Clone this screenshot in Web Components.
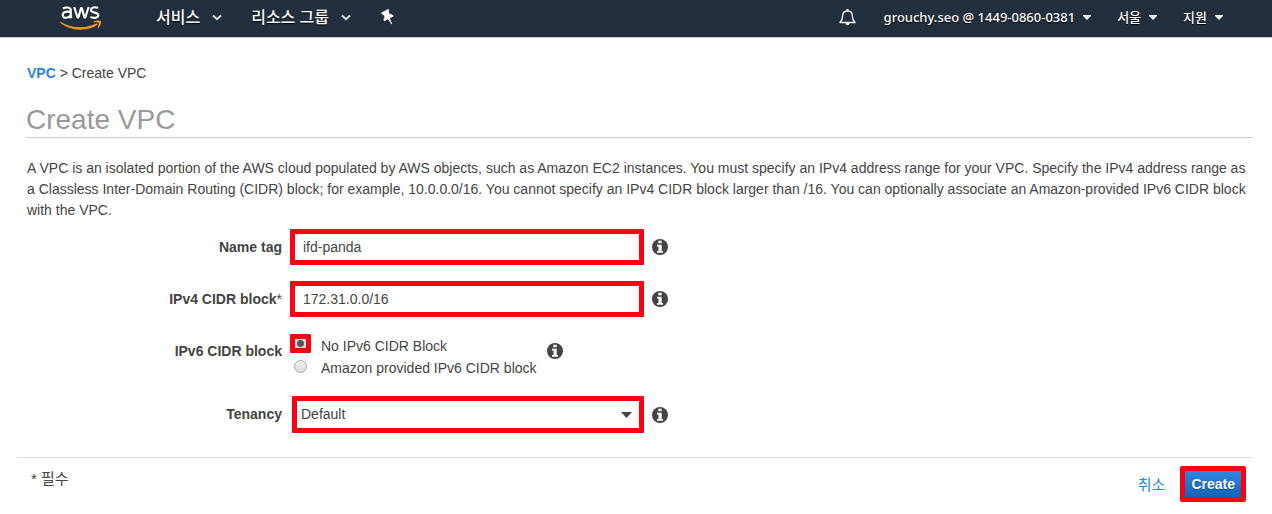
<!DOCTYPE html>
<html lang="ko">
<head>
<meta charset="utf-8">
<title>Create VPC</title>
<style>
body { margin: 0; background: #fff; color: #444; font: 14px/21px "Liberation Sans", "Noto Sans CJK KR", sans-serif; }
</style>
</head>
<body>
<vpc-page></vpc-page>
<script>
function define(name, html, init) {
  const template = document.createElement('template');
  template.innerHTML = html;
  customElements.define(name, class extends HTMLElement {
    constructor() {
      super();
      this.attachShadow({ mode: 'open' }).append(template.content.cloneNode(true));
    }
    connectedCallback() { if (init) init(this, this.shadowRoot); }
  });
}

define('info-icon', `
<style>:host { display: block; width: 16px; height: 16px; flex: none; } svg { display: block; }</style>
<svg width="16" height="16" viewBox="0 0 16 16" aria-hidden="true">
  <circle cx="8" cy="8" r="8" fill="#444"/>
  <path fill="#fff" d="M6.300 1.800h3.400v2.500H6.300zM5 5.700h4.700v6.200H11v1.800H5v-1.800h1.500V7.500H5z"/>
</svg>`);

define('nav-menu', `
<style>
:host { display: block; }
button { display: flex; align-items: center; gap: var(--menu-gap, 8px); margin: 0; padding: 0; border: 0; background: none; color: #fff;
  font: inherit; text-shadow: 0 1px 1px #000; white-space: nowrap; cursor: pointer; }
svg { display: block; }
.caret { display: none; }
:host([small]) .caret { display: block; }
:host([small]) .chevron { display: none; }
</style>
<button type="button"><slot></slot>
<svg class="chevron" width="10" height="7" viewBox="0 0 10 7" aria-hidden="true"><path d="M1 1.500l4 3.700 4-3.700" fill="none" stroke="#ddd" stroke-width="2"/></svg>
<svg class="caret" width="8" height="5" viewBox="0 0 8 5" aria-hidden="true"><path d="M0 0h8v1L4 5 0 1z" fill="#eee"/></svg>
</button>`);

define('console-nav', `
<style>
:host { display: flex; align-items: flex-start; justify-content: space-between; height: 37px; padding: 0 49px 0 60px; background: #232f3e;
  border-bottom: 1px solid #c9ccd0; font-family: "Noto Sans", "Noto Sans CJK KR", sans-serif; }
nav { display: flex; align-items: center; height: 34px; }
.main { font-size: 16px; line-height: 20px; font-weight: 500; --menu-gap: 12px; gap: 29px; }
.account { font-size: 13px; line-height: 20px; font-weight: 500; gap: 26px; }
a { display: block; margin-right: 25px; }
button { display: block; padding: 0; border: 0; background: none; cursor: pointer; }
.user { margin-left: 2px; }
svg { display: block; }
</style>
<nav class="main" aria-label="Services">
  <a href="#" aria-label="AWS"><svg width="42" height="26" viewBox="0 0 42 26">
    <g fill="none" stroke="#fff" stroke-width="2.1" stroke-linejoin="round">
      <path d="M3 4.500C5 3.200 10.800 2.600 10.800 6.400V12c0 1 .4 1.600.8 2.200M10.800 8C6 7 2.700 8 2.700 11c0 4.400 7.400 3.200 8.100-.6"/>
      <path d="M14.200 3l3.300 10.400h.9L21 4h.8l2.600 9.400h.9L28.700 3"/>
      <path d="M38 4c-2.600-1.300-7-.9-7 2 0 3.500 7.300 1.800 7.300 5.100 0 3.400-5.200 3.300-7.900 1.800"/>
    </g>
    <path fill="#f79a1c" d="M.4 17.800c11.500 7 25.600 7 36.100 1.800.9-.4 1.700.5.8 1.200C27.600 27.900 9.500 27.400.1 18.600c-.4-.4-.1-.9.3-.8z"/>
    <path fill="#f79a1c" d="M33.500 17.800c2-1.600 6.400-1.700 7.200-.8.8 1-.3 5.500-2.500 7.300-.4.300-.8.100-.6-.300.700-1.700 1.500-4.500 1.100-5.200-.500-.7-3.200-.6-4.800-.4-.5 0-.7-.300-.4-.6z"/>
  </svg></a>
  <nav-menu>서비스</nav-menu>
  <nav-menu>리소스 그룹</nav-menu>
  <button type="button" aria-label="Pin"><svg width="16" height="16" viewBox="0 0 16 16">
    <path fill="#fff" transform="rotate(-28 8 8)" d="M4 1h8v2.500h-1v3c1.600.6 2.500 1.700 2.500 3.500H9l-.6 6h-.8L7 10H2.500c0-1.800.9-2.900 2.500-3.500v-3H4z"/>
  </svg></button>
</nav>
<nav class="account" aria-label="Account">
  <button type="button" aria-label="Notifications"><svg width="17" height="18" viewBox="0 0 17 18">
    <path d="M1 14.500c2-2.200 2.700-3.500 2.700-7C3.700 4.500 5.500 3 8.500 3s4.800 1.500 4.800 4.500c0 3.500.7 4.800 2.700 7z" fill="none" stroke="#eee" stroke-width="1.400" stroke-linejoin="round"/>
    <path d="M7.500 1h2v2h-2zM6.500 15h4c0 3-4 3-4 0z" fill="#eee"/>
  </svg></button>
  <nav-menu class="user" small>grouchy.seo @ 1449-0860-0381</nav-menu>
  <nav-menu small>서울</nav-menu>
  <nav-menu small>지원</nav-menu>
</nav>`);

define('page-heading', `
<style>
:host { display: block; padding: 25px 0 20px 9px; }
nav { padding-left: 1px; }
a { color: #2b83e2; font-weight: bold; text-decoration: none; }
h1 { margin: 19px 0 0; border-bottom: 1px solid #ccc; color: #999; font-size: 28px; line-height: 34px; font-weight: normal; }
</style>
<nav aria-label="Breadcrumb"><a href="#">VPC</a> &gt; Create VPC</nav>
<h1>Create VPC</h1>`);

const fieldStyle = `
:host { display: grid; grid-template-columns: 265px 354px 16px; column-gap: 8px; align-items: center; }
label, .label { text-align: right; font-weight: bold; }
`;

define('text-field', `
<style>${fieldStyle}
input { box-sizing: border-box; width: 100%; height: 36px; padding: 0 8px; border: 5px solid #ff0010; border-radius: 1px; background: #fff; color: #444; font: inherit; outline: 0; }
</style>
<label for="box"><slot></slot></label><input id="box" type="text"><info-icon></info-icon>`,
(host, root) => { root.querySelector('input').value = host.getAttribute('value'); });

define('radio-field', `
<style>${fieldStyle}
:host { grid-template-columns: 265px auto 16px; justify-content: start; align-items: start; }
.label { padding-top: 8px; }
info-icon { margin-top: 10px; }
.options { display: grid; grid-template-columns: 21px auto; grid-auto-rows: 22px; column-gap: 10px; justify-items: center; padding: 1px 2px 2px 0; }
.options label { padding-top: 2px; line-height: 20px; font-weight: normal; justify-self: start; }
input { appearance: none; box-sizing: border-box; width: 13px; height: 13px; margin: 4px 0 0; border: 1px solid #aaa; border-radius: 50%; background: linear-gradient(#eee, #ddd); }
input:checked { width: 21px; height: 19px; margin: 0; border: 5px solid #ff0010; border-radius: 1px; background: radial-gradient(circle, #555 0 3px, #ddd 4px); }
</style>
<span class="label" id="group">IPv6 CIDR block</span>
<div class="options" role="radiogroup" aria-labelledby="group">
  <input type="radio" name="ipv6" id="none" checked><label for="none">No IPv6 CIDR Block</label>
  <input type="radio" name="ipv6" id="amazon"><label for="amazon">Amazon provided IPv6 CIDR block</label>
</div>
<info-icon></info-icon>`);

define('select-field', `
<style>${fieldStyle}
.wrap { display: grid; align-items: center; margin-left: 2px; }
select, svg { grid-area: 1 / 1; }
select { appearance: none; box-sizing: border-box; width: 100%; height: 37px; padding: 0 4px; border: 5px solid #ff0010; border-radius: 1px; background: #fff; color: #444; font: inherit; outline: 0; }
svg { justify-self: end; margin-right: 12px; pointer-events: none; z-index: 1; }
</style>
<label for="choice">Tenancy</label>
<div class="wrap"><select id="choice"><option>Default</option></select>
<svg width="11" height="6" viewBox="0 0 11 6" aria-hidden="true"><path d="M0 0h11L5.500 6z" fill="#444"/></svg></div>
<info-icon></info-icon>`);

define('form-footer', `
<style>
:host { display: flex; justify-content: space-between; align-items: center; margin-top: 24px; padding: 8px 7px 8px 14px; border-top: 1px solid #ddd; font-size: 15px; }
.note { padding-bottom: 12px; }
.actions { display: flex; align-items: center; gap: 15px; }
a { color: #2b83e2; text-decoration: none; }
button { height: 36px; padding: 0 6px; border: 5px solid #ff0010; border-radius: 2px; background: linear-gradient(#2f86de, #1463b8) padding-box; color: #fff;
  font: bold 14px/21px "Liberation Sans", sans-serif; text-shadow: 0 1px 1px #0b4a8f; }
</style>
<span class="note">* 필수</span>
<div class="actions"><a href="#">취소</a><button type="submit">Create</button></div>`);

define('vpc-page', `
<style>
:host { display: block; }
main { padding: 0 19px 0 17px; }
p { margin: 0; padding: 0 0 8px 10px; }
form { margin: 0; }
.fields { display: grid; row-gap: 16px; }
.star { font-weight: normal; }
</style>
<console-nav></console-nav>
<main>
  <page-heading></page-heading>
  <p>A VPC is an isolated portion of the AWS cloud populated by AWS objects, such as Amazon EC2 instances. You must specify an IPv4 address range for your VPC. Specify the IPv4 address range as a Classless Inter-Domain Routing (CIDR) block; for example, 10.0.0.0/16. You cannot specify an IPv4 CIDR block larger than /16. You can optionally associate an Amazon-provided IPv6 CIDR block with the VPC.</p>
  <form>
    <div class="fields">
      <text-field value="ifd-panda">Name tag</text-field>
      <text-field value="172.31.0.0/16">IPv4 CIDR block<span class="star">*</span></text-field>
      <radio-field></radio-field>
      <select-field></select-field>
    </div>
    <form-footer></form-footer>
  </form>
</main>`);
</script>
</body>
</html>
